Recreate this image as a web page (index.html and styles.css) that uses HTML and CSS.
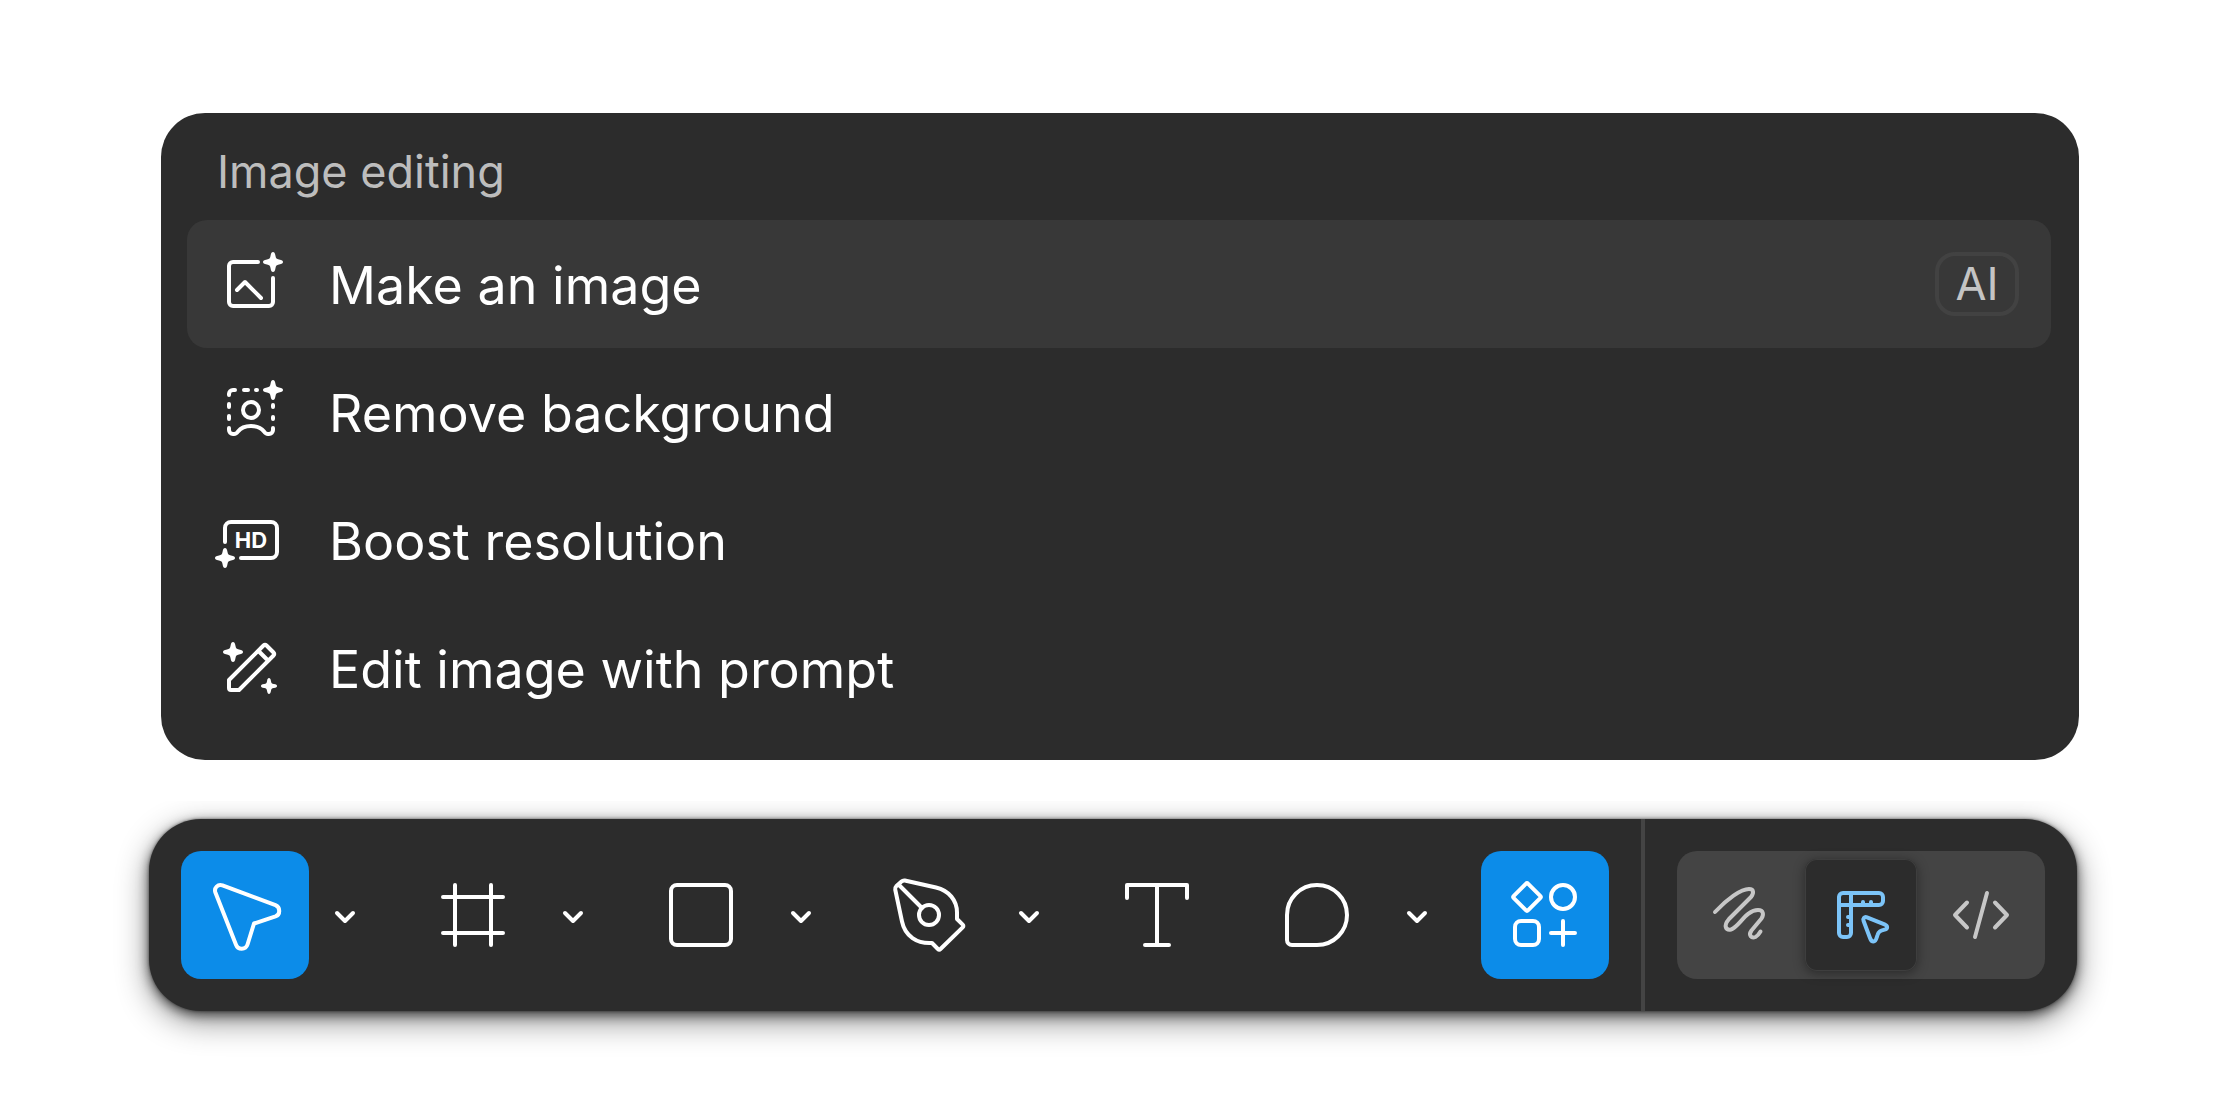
FILE: index.html
```html
<!DOCTYPE html>
<html lang="en">
<head>
    <meta charset="UTF-8">
    <meta name="viewport" content="width=device-width, initial-scale=1.0">
    <title>Image editing</title>
    <link rel="stylesheet" href="styles.css">
</head>
<body>

<!-- Shared shapes -->
<svg class="defs" width="0" height="0" aria-hidden="true">
    <symbol id="star" viewBox="0 0 20 20">
        <path d="M10 0c1.2 0 2 .8 2.5 4 .4 2.4 1.1 3.1 3.5 3.5 3.2.5 4 1.3 4 2.5s-.8 2-4 2.5c-2.4.4-3.1 1.1-3.5 3.5-.5 3.2-1.3 4-2.5 4s-2-.8-2.5-4c-.4-2.4-1.1-3.1-3.5-3.5-3.2-.5-4-1.3-4-2.5s.8-2 4-2.5c2.4-.4 3.1-1.1 3.5-3.5.5-3.2 1.3-4 2.5-4z" fill="currentColor" stroke="none"/>
    </symbol>
    <symbol id="chevron" viewBox="0 0 64 128">
        <path d="M24 62l8 8 8-8"/>
    </symbol>
</svg>

<section class="menu" aria-labelledby="menuTitle">
    <h1 class="menu-title" id="menuTitle">Image editing</h1>
    <ul class="menu-list">
        <li>
            <button class="menu-item active">
                <svg class="icon" viewBox="0 0 96 96">
                    <path d="M55 26H30a4 4 0 0 0-4 4v36a4 4 0 0 0 4 4h36a4 4 0 0 0 4-4V42M34 54l8-8 16 16"/>
                    <use href="#star" x="60" y="16" width="20" height="20"/>
                </svg>
                <span class="label">Make an image</span>
                <span class="badge">AI</span>
            </button>
        </li>
        <li>
            <button class="menu-item">
                <svg class="icon" viewBox="0 0 96 96">
                    <path d="M26 31v-1a4 4 0 0 1 4-4h2M41 26h4M53 26h1M26 40v3M26 52v3M70 41v2M70 53v2"/>
                    <path d="M26 64v2a4 4 0 0 0 4 4h1c2 0 3-1 4-2.500 3-4 7-5.500 13-5.500s10 1.500 13 5.500c1 1.500 2 2.500 4 2.500h1a4 4 0 0 0 4-4v-2"/>
                    <circle cx="48" cy="46" r="8"/>
                    <use href="#star" x="60" y="16" width="20" height="20"/>
                </svg>
                <span class="label">Remove background</span>
            </button>
        </li>
        <li>
            <button class="menu-item">
                <svg class="icon" viewBox="0 0 96 96">
                    <path d="M22 50V36a6 6 0 0 1 6-6h40a6 6 0 0 1 6 6v24a6 6 0 0 1-6 6H38"/>
                    <text class="icon-text" x="48" y="56">HD</text>
                    <use href="#star" x="12" y="56" width="20" height="20"/>
                </svg>
                <span class="label">Boost resolution</span>
            </button>
        </li>
        <li>
            <button class="menu-item">
                <svg class="icon" viewBox="0 0 96 96">
                    <path d="M26 60l34.500-34.500q1.500-1.500 3 0l7 7q1.500 1.500 0 3L36 70h-8a2 2 0 0 1-2-2zM55.500 31l9.500 9.500"/>
                    <use href="#star" x="20" y="22" width="20" height="20"/>
                    <use href="#star" x="58" y="58" width="16" height="16"/>
                </svg>
                <span class="label">Edit image with prompt</span>
            </button>
        </li>
    </ul>
</section>

<div class="dock">
    <div class="toolbar" role="toolbar" aria-label="Tools">
        <div class="tool-group">
            <button class="tool selected" aria-label="Move">
                <svg viewBox="0 0 128 128"><path d="M41.500 34.400l53 19.800c5 2 5 9.400 0 11.200L73 72.500l-6.500 21c-1.800 5.600-9.600 5.600-11.600 0L34.400 41.500c-1.600-4.600 2.500-8.700 7.100-7.100z"/></svg>
            </button>
            <button class="chevron" aria-label="Move options">
                <svg viewBox="0 0 64 128"><use href="#chevron"/></svg>
            </button>
        </div>
        <div class="tool-group">
            <button class="tool" aria-label="Frame">
                <svg viewBox="0 0 128 128"><path d="M46 34v60M82 34v60M34 46h60M34 82h60"/></svg>
            </button>
            <button class="chevron" aria-label="Frame options">
                <svg viewBox="0 0 64 128"><use href="#chevron"/></svg>
            </button>
        </div>
        <div class="tool-group">
            <button class="tool" aria-label="Rectangle">
                <svg viewBox="0 0 128 128"><rect x="34" y="34" width="60" height="60" rx="6"/></svg>
            </button>
            <button class="chevron" aria-label="Shape options">
                <svg viewBox="0 0 64 128"><use href="#chevron"/></svg>
            </button>
        </div>
        <div class="tool-group">
            <button class="tool" aria-label="Pen">
                <svg viewBox="0 0 128 128">
                    <path d="M36.500 30.500q1.400-1.300 3.300-1L71 36.500c13 3 21 13 21 25V68l5.700 5.700q1.300 1.300 0 2.600L75.500 98q-1.300 1.300-2.600 0L67 92c-15 1-27-7-30-21.500L30.200 38.500q-.4-1.800 1-3.200zM33.500 33.500L57 57"/>
                    <circle cx="64" cy="64" r="10"/>
                </svg>
            </button>
            <button class="chevron" aria-label="Pen options">
                <svg viewBox="0 0 64 128"><use href="#chevron"/></svg>
            </button>
        </div>
        <div class="tool-group">
            <button class="tool" aria-label="Text">
                <svg viewBox="0 0 128 128"><path d="M34 47V34h60v13M64 34v60M52 94h24"/></svg>
            </button>
        </div>
        <div class="tool-group">
            <button class="tool" aria-label="Comment">
                <svg viewBox="0 0 128 128"><path d="M64 34a30 30 0 0 1 0 60H39a5 5 0 0 1-5-5V64a30 30 0 0 1 30-30z"/></svg>
            </button>
            <button class="chevron" aria-label="Comment options">
                <svg viewBox="0 0 64 128"><use href="#chevron"/></svg>
            </button>
        </div>
        <div class="tool-group">
            <button class="tool selected" aria-label="Actions">
                <svg viewBox="0 0 128 128">
                    <path d="M44.800 32.800q1.200-1.200 2.400 0l12 12q1.200 1.200 0 2.400l-12 12q-1.200 1.200-2.400 0l-12-12q-1.200-1.200 0-2.400zM82 70v24M70 82h24"/>
                    <circle cx="82" cy="46" r="12"/>
                    <rect x="34" y="70" width="24" height="24" rx="6"/>
                </svg>
            </button>
        </div>
        <div class="divider"></div>
        <div class="modes">
            <button class="mode" aria-label="Draw">
                <svg viewBox="0 0 112 112"><path d="M30 53C42 40 56 30 64 30c5 0 5 4 2 8L44 60c-6 7-3 11.500 2 10.500C54 68 61 51 73 51c5.500 0 6 4.500 3.500 8.500l-10 12c-3.500 5 0 8 4 6.500 2-1 3.500-3 5-5.500"/></svg>
            </button>
            <button class="mode current" aria-label="Design">
                <svg viewBox="0 0 112 112">
                    <path d="M38 34h36a4 4 0 0 1 4 4v4a4 4 0 0 1-4 4H46v28a4 4 0 0 1-4 4h-4a4 4 0 0 1-4-4V38a4 4 0 0 1 4-4zM46 34v12H34M58 43v2M66 43v2M43 58h2M43 66h2"/>
                    <path d="M62 58.300l17.500 7c3.500 1.400 3.500 4.400 0 5.400-4 1.100-6 1.800-7 5.300-1.200 3.800-1.500 6.500-4 6.500-2 0-2.800-1.500-3.500-3.500L58.600 62c-1-2.500.9-4.700 3.400-3.700z"/>
                </svg>
            </button>
            <button class="mode" aria-label="Dev">
                <svg viewBox="0 0 112 112"><path d="M42 43.500L30 56l12 12.500M62 34L50 78M70 43.500L82 56 70 68.500"/></svg>
            </button>
        </div>
    </div>
</div>

</body>
</html>
```

FILE: styles.css
```css
* {
    box-sizing: border-box;
}
body {
    font-family: Inter, sans-serif;
    margin: 0;
    padding: 0;
    background-color: #fff;
}
button {
    background: none;
    border: none;
    padding: 0;
    color: inherit;
    font-family: inherit;
    cursor: pointer;
}
svg {
    display: block;
    fill: none;
    stroke: currentColor;
    stroke-width: 4;
    stroke-linecap: round;
    stroke-linejoin: round;
}
.defs {
    position: absolute;
}

/* Menu */
.menu {
    margin: 113px 161px 41px;
    padding: 27px 28px 28px 26px;
    background-color: #2c2c2c;
    color: #fff;
    border-radius: 44px;
}
.menu-title {
    margin: 0;
    padding: 0 30px 16px;
    font-size: 45px;
    font-weight: 400;
    line-height: 64px;
    color: #bdbdbd;
}
.menu-list {
    list-style: none;
    margin: 0;
    padding: 0;
}
.menu-item {
    display: flex;
    align-items: center;
    gap: 30px;
    width: 100%;
    height: 128px;
    padding: 0 32px 0 16px;
    border-radius: 20px;
    font-size: 52px;
    line-height: 64px;
    text-align: left;
}
.menu-item.active {
    background-color: #383838;
}
.label {
    padding-top: 4px;
}
.icon {
    width: 96px;
    height: 96px;
    flex-shrink: 0;
}
.icon-text {
    font-size: 22px;
    font-weight: 700;
    text-anchor: middle;
    fill: currentColor;
    stroke: none;
}
.badge {
    margin-left: auto;
    width: 84px;
    height: 64px;
    border: 4px solid #424242;
    border-radius: 20px;
    font-size: 45px;
    line-height: 56px;
    text-align: center;
    color: #c4c4c4;
}

/* Toolbar */
.dock {
    overflow: hidden;
    padding: 18px 163px 64px 149px;
}
.toolbar {
    display: flex;
    align-items: center;
    justify-content: space-between;
    gap: 32px;
    height: 192px;
    padding: 0 32px;
    background-color: #2c2c2c;
    color: #fff;
    border-radius: 52px;
    box-shadow: 0 0 3px rgba(0, 0, 0, 0.5), 0 4px 12px rgba(0, 0, 0, 0.6), 0 10px 32px rgba(0, 0, 0, 0.45);
}
.tool-group {
    display: flex;
    gap: 4px;
}
.tool {
    width: 128px;
    height: 128px;
    border-radius: 20px;
}
.tool.selected {
    background-color: #0c8ce9;
}
.chevron {
    width: 64px;
    height: 128px;
}
.divider {
    width: 4px;
    align-self: stretch;
    background-color: #444;
}
.modes {
    display: flex;
    gap: 8px;
    padding: 8px;
    background-color: #444;
    border-radius: 20px;
}
.mode {
    width: 112px;
    height: 112px;
    border-radius: 12px;
    color: #c7c7c7;
}
.mode.current {
    background-color: #2c2c2c;
    color: #7cc4f8;
    box-shadow: inset 0 0 0 1px #3e3e3e, 0 2px 12px rgba(0, 0, 0, 0.4);
}
```
